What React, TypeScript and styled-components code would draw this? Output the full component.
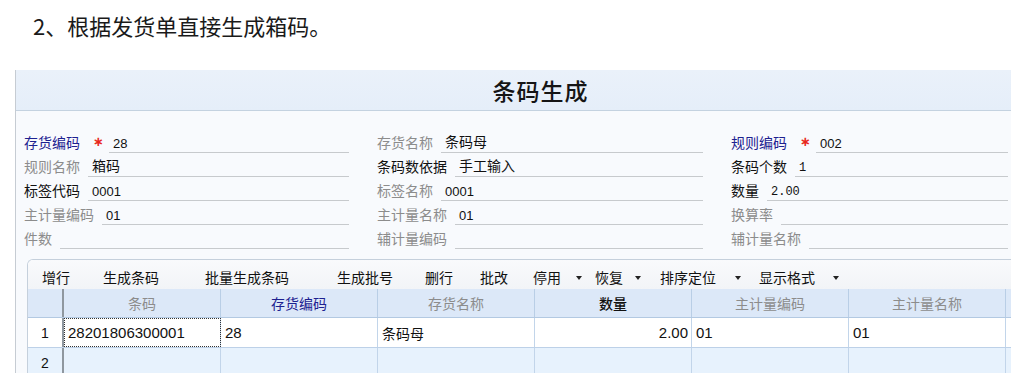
import React from 'react';
import styled, { createGlobalStyle } from 'styled-components';

type Tone = 'required' | 'normal' | 'muted';

interface FieldDef {
  label: string;
  tone: Tone;
  required?: boolean;
  value?: string;
  mono?: boolean;
}

interface ToolDef {
  text: string;
  ml: number;
  arrowGap?: number;
}

interface ColumnDef {
  title: string;
  tone: Tone;
  bold?: boolean;
}

const CJK = '"Noto Sans CJK SC", "Noto Sans", sans-serif';
const LATIN = '"Liberation Sans", Arial, sans-serif';

const toneColor: Record<Tone, string> = {
  required: '#1d2190',
  normal: '#111111',
  muted: '#8c8c8c',
};

const GlobalStyle = createGlobalStyle`
  html, body {
    margin: 0;
    padding: 0;
    background: #ffffff;
  }
  body {
    font-family: ${CJK};
    overflow: hidden;
  }
`;

const Page = styled.div`
  width: 1011px;
  height: 384px;
  overflow: hidden;
  background: #ffffff;
`;

const Heading = styled.h2`
  margin: 0;
  height: 70px;
  box-sizing: border-box;
  padding: 11px 0 0 33px;
  font-family: ${CJK};
  font-size: 22px;
  font-weight: 400;
  line-height: 28px;
  color: #1a1a1a;
`;

const Frame = styled.div`
  margin-left: 15px;
  width: 1050px;
  height: 303px;
  box-sizing: border-box;
  border-left: 1px solid #c6ccd3;
  background: #f8fafd;
  overflow: hidden;
`;

const TitleBar = styled.div`
  height: 41px;
  box-sizing: border-box;
  border-bottom: 1px solid #c4d2e0;
  background: linear-gradient(#eaf1fa, #e5eef9);
  display: flex;
  align-items: center;
  justify-content: center;
`;

const Title = styled.h1`
  margin: 0;
  font-family: ${CJK};
  font-size: 23px;
  font-weight: 500;
  letter-spacing: 1px;
  line-height: 30px;
  color: #151515;
`;

const FormGrid = styled.div`
  display: grid;
  grid-template-columns: 325px 326px 277px;
  grid-auto-rows: 24px;
  column-gap: 28px;
  padding: 18px 0 0 8px;
`;

const Field = styled.div`
  display: flex;
  align-items: flex-end;
  height: 24px;
`;

const Label = styled.span<{ $tone: Tone }>`
  flex-shrink: 0;
  margin-right: 8px;
  padding-bottom: 1px;
  font-family: ${CJK};
  font-size: 14px;
  line-height: 20px;
  white-space: nowrap;
  color: ${(p) => toneColor[p.$tone]};
`;

const Asterisk = styled.span`
  flex-shrink: 0;
  width: 21px;
  padding-bottom: 1px;
  text-align: center;
  font-family: "DejaVu Sans", sans-serif;
  font-size: 13px;
  font-weight: 700;
  line-height: 20px;
  color: #e8281c;
`;

const ValueBox = styled.div`
  flex: 1;
  height: 24px;
  box-sizing: border-box;
  border-bottom: 1px solid #c7cacd;
  display: flex;
  align-items: flex-end;
  padding-left: 4px;
`;

const Value = styled.span<{ $mono?: boolean; $cjk?: boolean }>`
  font-family: ${(p) => (p.$mono ? '"Liberation Mono", monospace' : p.$cjk ? CJK : LATIN)};
  font-size: ${(p) => (p.$mono ? '12px' : p.$cjk ? '14px' : '13px')};
  line-height: ${(p) => (p.$cjk ? '20px' : '14px')};
  margin-bottom: 1px;
  color: #111;
  white-space: nowrap;
`;

const TableBox = styled.div`
  margin: 10px 0 0 11px;
  border: 1px solid #c5d0dc;
  border-right: none;
  border-bottom: none;
  border-radius: 6px 0 0 0;
  overflow: hidden;
  background: #ffffff;
`;

const Toolbar = styled.div`
  height: 29px;
  box-sizing: border-box;
  padding: 4px 0 0 14px;
  display: flex;
  align-items: center;
  background: linear-gradient(#f9fafc, #f2f4f7);
`;

const ToolItem = styled.span<{ $ml: number }>`
  display: flex;
  align-items: center;
  margin-left: ${(p) => p.$ml}px;
  font-family: ${CJK};
  font-size: 14px;
  line-height: 20px;
  color: #111;
  white-space: nowrap;
`;

const Caret = styled.span<{ $gap: number }>`
  margin-left: ${(p) => p.$gap}px;
  margin-top: 2px;
  width: 0;
  height: 0;
  border-left: 3px solid transparent;
  border-right: 3px solid transparent;
  border-top: 4px solid #222;
`;

const GridRow = styled.div<{ $kind: 'head' | 'odd' | 'even' }>`
  display: grid;
  grid-template-columns: 36px repeat(6, 157px) 120px;
  height: ${(p) => (p.$kind === 'head' ? 29 : 30)}px;
  box-sizing: border-box;
  border-bottom: 1px solid ${(p) => (p.$kind === 'head' ? '#b3c9e2' : '#bdd1e8')};
  background: ${(p) => (p.$kind === 'head' ? '#dce8f8' : p.$kind === 'odd' ? '#ffffff' : '#e7f2fd')};
`;

const NumCell = styled.div`
  border-right: 2px solid #8f979f;
  display: flex;
  align-items: center;
  justify-content: center;
  font-family: ${LATIN};
  font-size: 14px;
  color: #111;
`;

const HeadCell = styled.div<{ $tone: Tone; $bold?: boolean }>`
  border-right: 1px solid #b9cee6;
  display: flex;
  align-items: center;
  justify-content: center;
  font-family: ${CJK};
  font-size: 14px;
  font-weight: ${(p) => (p.$bold ? 500 : 400)};
  color: ${(p) => toneColor[p.$tone]};
  white-space: nowrap;
`;

const DataCell = styled.div<{ $align?: 'left' | 'right'; $focus?: boolean; $cjk?: boolean }>`
  border-right: 1px solid #c2d5ea;
  display: flex;
  align-items: center;
  justify-content: ${(p) => (p.$align === 'right' ? 'flex-end' : 'flex-start')};
  padding: 0 3px 0 4px;
  font-family: ${(p) => (p.$cjk ? CJK : LATIN)};
  font-size: ${(p) => (p.$cjk ? '14px' : '15px')};
  color: #111;
  white-space: nowrap;
  outline: ${(p) => (p.$focus ? '1px dotted #333' : 'none')};
  outline-offset: -1px;
`;

const fields: FieldDef[][] = [
  [
    { label: '存货编码', tone: 'required', required: true, value: '28' },
    { label: '存货名称', tone: 'muted', value: '条码母' },
    { label: '规则编码', tone: 'required', required: true, value: '002' },
  ],
  [
    { label: '规则名称', tone: 'muted', value: '箱码' },
    { label: '条码数依据', tone: 'normal', value: '手工输入' },
    { label: '条码个数', tone: 'normal', value: '1', mono: true },
  ],
  [
    { label: '标签代码', tone: 'normal', value: '0001' },
    { label: '标签名称', tone: 'muted', value: '0001' },
    { label: '数量', tone: 'normal', value: '2.00', mono: true },
  ],
  [
    { label: '主计量编码', tone: 'muted', value: '01' },
    { label: '主计量名称', tone: 'muted', value: '01' },
    { label: '换算率', tone: 'muted' },
  ],
  [
    { label: '件数', tone: 'muted' },
    { label: '辅计量编码', tone: 'muted' },
    { label: '辅计量名称', tone: 'muted' },
  ],
];

const tools: ToolDef[] = [
  { text: '增行', ml: 0 },
  { text: '生成条码', ml: 33 },
  { text: '批量生成条码', ml: 46 },
  { text: '生成批号', ml: 48 },
  { text: '删行', ml: 32 },
  { text: '批改', ml: 27 },
  { text: '停用', ml: 25, arrowGap: 15 },
  { text: '恢复', ml: 13, arrowGap: 12 },
  { text: '排序定位', ml: 19, arrowGap: 19 },
  { text: '显示格式', ml: 18, arrowGap: 18 },
];

const columns: ColumnDef[] = [
  { title: '条码', tone: 'muted' },
  { title: '存货编码', tone: 'required' },
  { title: '存货名称', tone: 'muted' },
  { title: '数量', tone: 'normal', bold: true },
  { title: '主计量编码', tone: 'muted' },
  { title: '主计量名称', tone: 'muted' },
];

const hasCjk = (s: string) => /[\u4e00-\u9fff]/.test(s);

const App: React.FC = () => {
  return (
    <Page>
      <GlobalStyle />
      <Heading>2、根据发货单直接生成箱码。</Heading>

      <Frame>
        <TitleBar>
          <Title>条码生成</Title>
        </TitleBar>

        <FormGrid>
          {fields.flat().map((f) => (
            <Field key={f.label}>
              <Label $tone={f.tone}>{f.label}</Label>
              {f.required && <Asterisk>∗</Asterisk>}
              <ValueBox>
                {f.value && (
                  <Value $mono={f.mono} $cjk={hasCjk(f.value)}>
                    {f.value}
                  </Value>
                )}
              </ValueBox>
            </Field>
          ))}
        </FormGrid>

        <TableBox>
          <Toolbar>
            {tools.map((t) => (
              <ToolItem key={t.text} $ml={t.ml}>
                {t.text}
                {t.arrowGap !== undefined && <Caret $gap={t.arrowGap} />}
              </ToolItem>
            ))}
          </Toolbar>

          <GridRow $kind="head">
            <NumCell />
            {columns.map((c) => (
              <HeadCell key={c.title} $tone={c.tone} $bold={c.bold}>
                {c.title}
              </HeadCell>
            ))}
            <HeadCell $tone="muted" />
          </GridRow>

          <GridRow $kind="odd">
            <NumCell>1</NumCell>
            <DataCell $focus>28201806300001</DataCell>
            <DataCell>28</DataCell>
            <DataCell $cjk>条码母</DataCell>
            <DataCell $align="right">2.00</DataCell>
            <DataCell>01</DataCell>
            <DataCell>01</DataCell>
            <DataCell />
          </GridRow>

          <GridRow $kind="even">
            <NumCell>2</NumCell>
            <DataCell />
            <DataCell />
            <DataCell />
            <DataCell />
            <DataCell />
            <DataCell />
            <DataCell />
          </GridRow>
        </TableBox>
      </Frame>
    </Page>
  );
};

export default App;
